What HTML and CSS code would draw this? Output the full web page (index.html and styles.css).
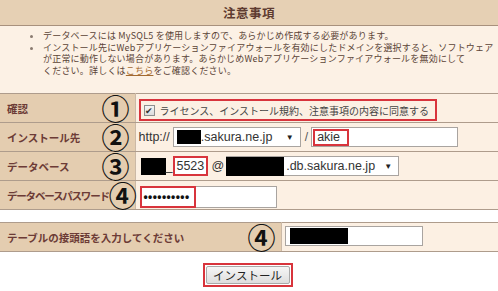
FILE: index.html
```html
<!DOCTYPE html>
<html lang="ja">
<head>
    <meta charset="UTF-8">
    <title>インストール</title>
    <link rel="stylesheet" href="styles.css">
</head>
<body>
    <div class="notice">
        <div class="notice-title">注意事項</div>
        <ul class="notice-list">
            <li>データベースには MySQL5 を使用しますので、あらかじめ作成する必要があります。</li>
            <li>インストール先にWebアプリケーションファイアウォールを有効にしたドメインを選択すると、ソフトウェア<br>が正常に動作しない場合があります。あらかじめWebアプリケーションファイアウォールを無効にして<br>ください。詳しくは<a href="#">こちら</a>をご確認ください。</li>
        </ul>
    </div>

    <table class="form-table">
        <tr>
            <th><div class="label-cell"><span>確認</span><span class="num">①</span></div></th>
            <td>
                <label class="agree mark">
                    <span class="checkbox">&#10004;</span>ライセンス、インストール規約、注意事項の内容に同意する
                </label>
            </td>
        </tr>
        <tr>
            <th><div class="label-cell"><span>インストール先</span><span class="num">②</span></div></th>
            <td>
                <div class="field-row">
                    <span class="plain">http://</span>
                    <span class="fake-select domain-select"><span class="redact"></span>.sakura.ne.jp<span class="arrow">▼</span></span>
                    <span class="slash">/</span>
                    <span class="text-input dir-input"><span class="mark">akie</span></span>
                </div>
            </td>
        </tr>
        <tr>
            <th><div class="label-cell"><span>データベース</span><span class="num">③</span></div></th>
            <td>
                <div class="field-row">
                    <span class="redact db-user"></span><span class="plain">_</span>
                    <span class="mark db-num">5523</span>
                    <span class="plain at">@</span>
                    <span class="fake-select db-select"><span class="redact wide"></span>.db.sakura.ne.jp<span class="arrow">▼</span></span>
                </div>
            </td>
        </tr>
        <tr>
            <th><div class="label-cell"><span class="narrow">データベースパスワード</span><span class="num">④</span></div></th>
            <td>
                <span class="text-input pass-input"><span class="mark pass-mark">••••••••••</span></span>
            </td>
        </tr>
    </table>

    <table class="form-table prefix-table">
        <tr>
            <th><div class="label-cell"><span>テーブルの接頭語を入力してください</span><span class="num">④</span></div></th>
            <td>
                <span class="text-input prefix-input"><span class="redact prefix"></span></span>
            </td>
        </tr>
    </table>

    <div class="actions">
        <span class="mark button-mark"><button type="button" class="install-btn">インストール</button></span>
    </div>
</body>
</html>
```

FILE: styles.css
```css
:root {
    --tan: #e4cdb0;
    --tan-dark: #e6d0b4;
    --cream: #fcf0e3;
    --line: #ae9c8c;
    --label: #6c3b36;
    --red: #d8343c;
    --field: #a9a4a0;
}

* {
    box-sizing: border-box;
}

body {
    margin: 0;
    width: 498px;
    background: #ffffff;
    font-family: "Noto Sans CJK JP", sans-serif;
    color: #222;
}

/* notice box */
.notice {
    background: #fcf1e5;
}

.notice-title {
    height: 26px;
    background: var(--tan-dark);
    border-bottom: 1px solid #a8917d;
    text-align: center;
    font-weight: bold;
    font-size: 12.5px;
    line-height: 25px;
    color: #5e3b30;
    letter-spacing: 0.5px;
}

.notice-list {
    margin: 0;
    padding: 4px 0 17px 43px;
    font-size: 9px;
    line-height: 11.5px;
    letter-spacing: 0.2px;
    color: #5a4336;
    white-space: nowrap;
}

.notice-list li::marker {
    color: #8a7b70;
}

.notice-list a {
    color: #a3692f;
}

/* form tables */
.form-table {
    width: 100%;
    table-layout: fixed;
    border-collapse: collapse;
    border-top: 1px solid var(--line);
}

.form-table th,
.form-table td {
    height: 29px;
    padding: 0 3px;
    border-bottom: 1px solid var(--line);
    vertical-align: middle;
}

.form-table th {
    width: 135px;
    padding: 0 5px 0 7px;
    background: var(--tan);
    border-right: 1px solid #cbb9a6;
    text-align: left;
    font-size: 10.5px;
    color: var(--label);
    white-space: nowrap;
}

.form-table td {
    background: var(--cream);
}

.label-cell {
    display: flex;
    align-items: center;
    justify-content: space-between;
    height: 20px;
}

.narrow {
    letter-spacing: -1.2px;
}

.num {
    font-family: "Noto Sans CJK JP", sans-serif;
    font-size: 28px;
    line-height: 20px;
    font-weight: bold;
    color: #111;
}

.mark {
    border: 2px solid var(--red);
}

.agree {
    display: inline-flex;
    align-items: center;
    gap: 5px;
    height: 22px;
    padding: 0 6px 0 3px;
    font-size: 10px;
    color: #444;
}

.checkbox {
    display: inline-flex;
    align-items: center;
    justify-content: center;
    width: 11px;
    height: 11px;
    border: 1px solid #8e8f8f;
    background: linear-gradient(#f4f4f4, #dcdcdc);
    font-size: 9px;
    color: #333;
}

.field-row {
    display: flex;
    align-items: center;
}

.plain {
    font-family: "Liberation Sans", Arial, sans-serif;
    font-size: 12.5px;
    color: #333;
}

.fake-select,
.text-input {
    display: inline-flex;
    align-items: center;
    height: 20px;
    background: #fff;
    border: 1px solid var(--field);
    font-family: "Liberation Sans", Arial, sans-serif;
    font-size: 12.5px;
    color: #333;
}

.domain-select {
    width: 128px;
    margin-left: 3px;
    padding-left: 3px;
}

.arrow {
    margin-left: auto;
    margin-right: 6px;
    font-size: 8px;
    color: #222;
}

.redact {
    display: inline-block;
    width: 24px;
    height: 14px;
    background: #000;
}

.slash {
    margin: 0 3px 0 4px;
    font-family: "Liberation Sans", Arial, sans-serif;
    font-size: 12px;
    color: #555;
}

.dir-input {
    width: 147px;
    padding-left: 1px;
}

.dir-input .mark {
    height: 17px;
    width: 36px;
    padding-left: 2px;
    line-height: 13px;
}

.db-user {
    width: 25px;
    height: 17px;
    margin-left: 2px;
}

.db-num {
    width: 35px;
    height: 20px;
    margin-left: 1px;
    font-family: "Liberation Sans", Arial, sans-serif;
    font-size: 12.5px;
    line-height: 16px;
    padding-left: 1px;
    color: #333;
    background: #fff;
}

.at {
    margin: 0 2px 0 3px;
}

.db-select {
    width: 173px;
    border-left: none;
}

.db-select .wide {
    width: 58px;
    height: 19px;
    margin-right: 2px;
}

.pass-input {
    width: 137px;
    height: 22px;
    margin-left: 1px;
}

.pass-mark {
    display: inline-flex;
    align-items: center;
    width: 56px;
    height: 22px;
    margin-left: -1px;
    padding-left: 2px;
    font-family: "Liberation Sans", Arial, sans-serif;
    font-size: 12px;
    font-weight: bold;
    letter-spacing: 0.4px;
    color: #111;
}

.prefix-table {
    margin-top: 12px;
}

.prefix-table th {
    width: 281px;
}

.prefix-input {
    width: 138px;
    padding-left: 4px;
}

.prefix {
    width: 58px;
    height: 16px;
}

.actions {
    display: flex;
    justify-content: center;
    padding-top: 11px;
}

.button-mark {
    display: inline-flex;
    padding: 1px;
    margin-left: -3px;
}

.install-btn {
    width: 84px;
    height: 18px;
    padding: 0;
    border: 1px solid #a9a9a9;
    border-radius: 2px;
    background: linear-gradient(#f6f6f6, #dedede);
    font-family: "Noto Sans CJK JP", sans-serif;
    font-size: 11.5px;
    line-height: 16px;
    color: #222;
}
```
